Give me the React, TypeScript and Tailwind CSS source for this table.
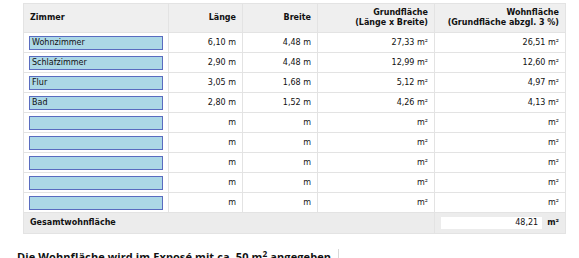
const ROWS = [
  { name: "Wohnzimmer", l: "6,10", b: "4,48", g: "27,33", w: "26,51" },
  { name: "Schlafzimmer", l: "2,90", b: "4,48", g: "12,99", w: "12,60" },
  { name: "Flur", l: "3,05", b: "1,68", g: "5,12", w: "4,97" },
  { name: "Bad", l: "2,80", b: "1,52", g: "4,26", w: "4,13" },
  { name: "", l: "", b: "", g: "", w: "" },
  { name: "", l: "", b: "", g: "", w: "" },
  { name: "", l: "", b: "", g: "", w: "" },
  { name: "", l: "", b: "", g: "", w: "" },
  { name: "", l: "", b: "", g: "", w: "" },
];

const cell = "border border-[#e3e3e3] px-[6px] text-right h-[20px] p-0";

export default function App() {
  return (
    <div className="h-[258px] w-[579px] overflow-hidden bg-white font-['DejaVu_Sans',sans-serif] text-[#111]">
      <div className="pl-[23px] pt-[3px]">
        <table className="w-[542px] table-fixed border-collapse text-[8px]">
          <colgroup>
            <col className="w-[145px]" />
            <col className="w-[74px]" />
            <col className="w-[75px]" />
            <col className="w-[117px]" />
            <col className="w-[131px]" />
          </colgroup>
          <thead>
            <tr className="h-[29px] bg-[#efefef] font-bold leading-[10px]">
              <th className="border border-[#e3e3e3] px-[6px] text-left">Zimmer</th>
              <th className="border border-[#e3e3e3] px-[6px] text-right">Länge</th>
              <th className="border border-[#e3e3e3] px-[6px] text-right">Breite</th>
              <th className="border border-[#e3e3e3] px-[6px] text-right">
                Grundfläche
                <br />
                (Länge x Breite)
              </th>
              <th className="border border-[#e3e3e3] px-[6px] text-right">
                Wohnfläche
                <br />
                (Grundfläche abzgl. 3 %)
              </th>
            </tr>
          </thead>
          <tbody>
            {ROWS.map((r, i) => (
              <tr key={i} className="h-[20px]">
                <td className="border border-[#e3e3e3] px-[5px]">
                  <div className="flex h-[14px] w-[134px] items-center border-[1.5px] border-[#5a6cc0] bg-[#acd8e6] px-[2px] leading-none">
                    {r.name}
                  </div>
                </td>
                <td className={cell}>{r.l ? `${r.l} m` : "m"}</td>
                <td className={cell}>{r.b ? `${r.b} m` : "m"}</td>
                <td className={cell}>{r.g ? `${r.g} m²` : "m²"}</td>
                <td className={cell}>{r.w ? `${r.w} m²` : "m²"}</td>
              </tr>
            ))}
            <tr className="h-[21px] bg-[#ececec]">
              <td colSpan={4} className="border border-[#e3e3e3] px-[6px] font-bold">
                Gesamtwohnfläche
              </td>
              <td className="border border-[#e3e3e3] pl-[1px] pr-[6px]">
                <div className="flex items-center justify-end">
                  <div className="flex h-[12px] w-[101px] items-center justify-end bg-white pr-[4px]">48,21</div>
                  <span className="ml-[5px] font-bold">m²</span>
                </div>
              </td>
            </tr>
          </tbody>
        </table>
      </div>
      <div className="mt-[15px] flex items-start pl-[17px]">
        <p className="font-['Open_Sans',sans-serif] text-[11px] font-bold leading-[16px] tracking-[0.1px] text-[#111]">
          Die Wohnfläche wird im Exposé mit ca. 50 m<sup>2</sup> angegeben.
        </p>
        <div className="ml-[4px] h-[20px] w-px bg-[#d8d8d8]" />
      </div>
    </div>
  );
}
